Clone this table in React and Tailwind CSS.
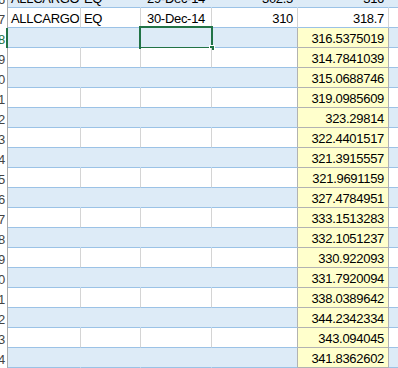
const rows = [
  { n: 6, a: "ALLCARGO", b: "EQ", c: "29-Dec-14", d: "302.5", e: "316" },
  { n: 7, a: "ALLCARGO", b: "EQ", c: "30-Dec-14", d: "310", e: "318.7" },
  { n: 8, e: "316.5375019", y: true, sel: true },
  { n: 9, e: "314.7841039", y: true },
  { n: 10, e: "315.0688746", y: true },
  { n: 11, e: "319.0985609", y: true },
  { n: 12, e: "323.29814", y: true },
  { n: 13, e: "322.4401517", y: true },
  { n: 14, e: "321.3915557", y: true },
  { n: 15, e: "321.9691159", y: true },
  { n: 16, e: "327.4784951", y: true },
  { n: 17, e: "333.1513283", y: true },
  { n: 18, e: "332.1051237", y: true },
  { n: 19, e: "330.922093", y: true },
  { n: 20, e: "331.7920094", y: true },
  { n: 21, e: "338.0389642", y: true },
  { n: 22, e: "344.2342334", y: true },
  { n: 23, e: "343.094045", y: true },
  { n: 24, e: "341.8362602", y: true },
];

function Row({ r }) {
  const band = r.n % 2 === 0;
  const bg = band ? "bg-[#ddebf7]" : "bg-white";
  const vline = band ? "border-r-[#ddebf7]" : "border-r-[#d4d4d4]";
  const base = "h-[20px] border-b border-r flex items-end pb-[1px] whitespace-nowrap shrink-0";
  const cell = `${base} border-b-[#9bc2e6] ${bg}`;

  return (
    <div className="flex h-[20px]">
      <div
        className={`w-[8px] shrink-0 h-[20px] overflow-hidden flex items-end pb-[1px] bg-white ${
          r.sel ? "border-r-2 border-r-[#217346] text-[#217346]" : "border-r border-r-[#ababab] text-[#444]"
        }`}
      >
        <div className="w-[30px] shrink-0 -ml-[23px] text-right pr-[2px]">{r.n}</div>
      </div>
      <div className={`w-[73px] px-[3px] ${cell} ${vline}`}>{r.a}</div>
      <div className={`w-[60px] px-[3px] ${cell} ${vline}`}>{r.b}</div>
      <div className={`relative w-[71px] px-[6px] ${cell} ${vline}`}>
        {r.c}
        {r.sel && (
          <div className="absolute -left-[2px] -top-[2px] w-[74px] h-[23px] border-2 border-[#217346]">
            <div className="absolute -right-[4px] -bottom-[4px] w-[6px] h-[6px] bg-[#217346] border border-white" />
          </div>
        )}
      </div>
      <div className={`w-[86px] px-[4px] justify-end ${cell} ${r.y ? "border-r-[#b2b2b2]" : vline}`}>
        {r.d}
      </div>
      {r.y ? (
        <div className={`w-[91px] px-[4px] justify-end ${base} bg-[#ffffcc] border-r-[#b2b2b2] border-b-[#b2b2b2]`}>
          {r.e}
        </div>
      ) : (
        <div className={`w-[91px] px-[4px] justify-end ${cell} ${vline}`}>{r.e}</div>
      )}
      <div className={`flex-1 h-[20px] border-b border-b-[#9bc2e6] ${bg}`} />
    </div>
  );
}

export default function App() {
  return (
    <div
      className="w-[398px] h-[368px] overflow-hidden bg-white text-black text-[13px] leading-[15px] tracking-[-0.3px]"
      style={{ fontFamily: '"Liberation Sans", Arial, sans-serif' }}
    >
      <div className="-mt-[12px]">
        {rows.map((r) => (
          <Row key={r.n} r={r} />
        ))}
      </div>
    </div>
  );
}
